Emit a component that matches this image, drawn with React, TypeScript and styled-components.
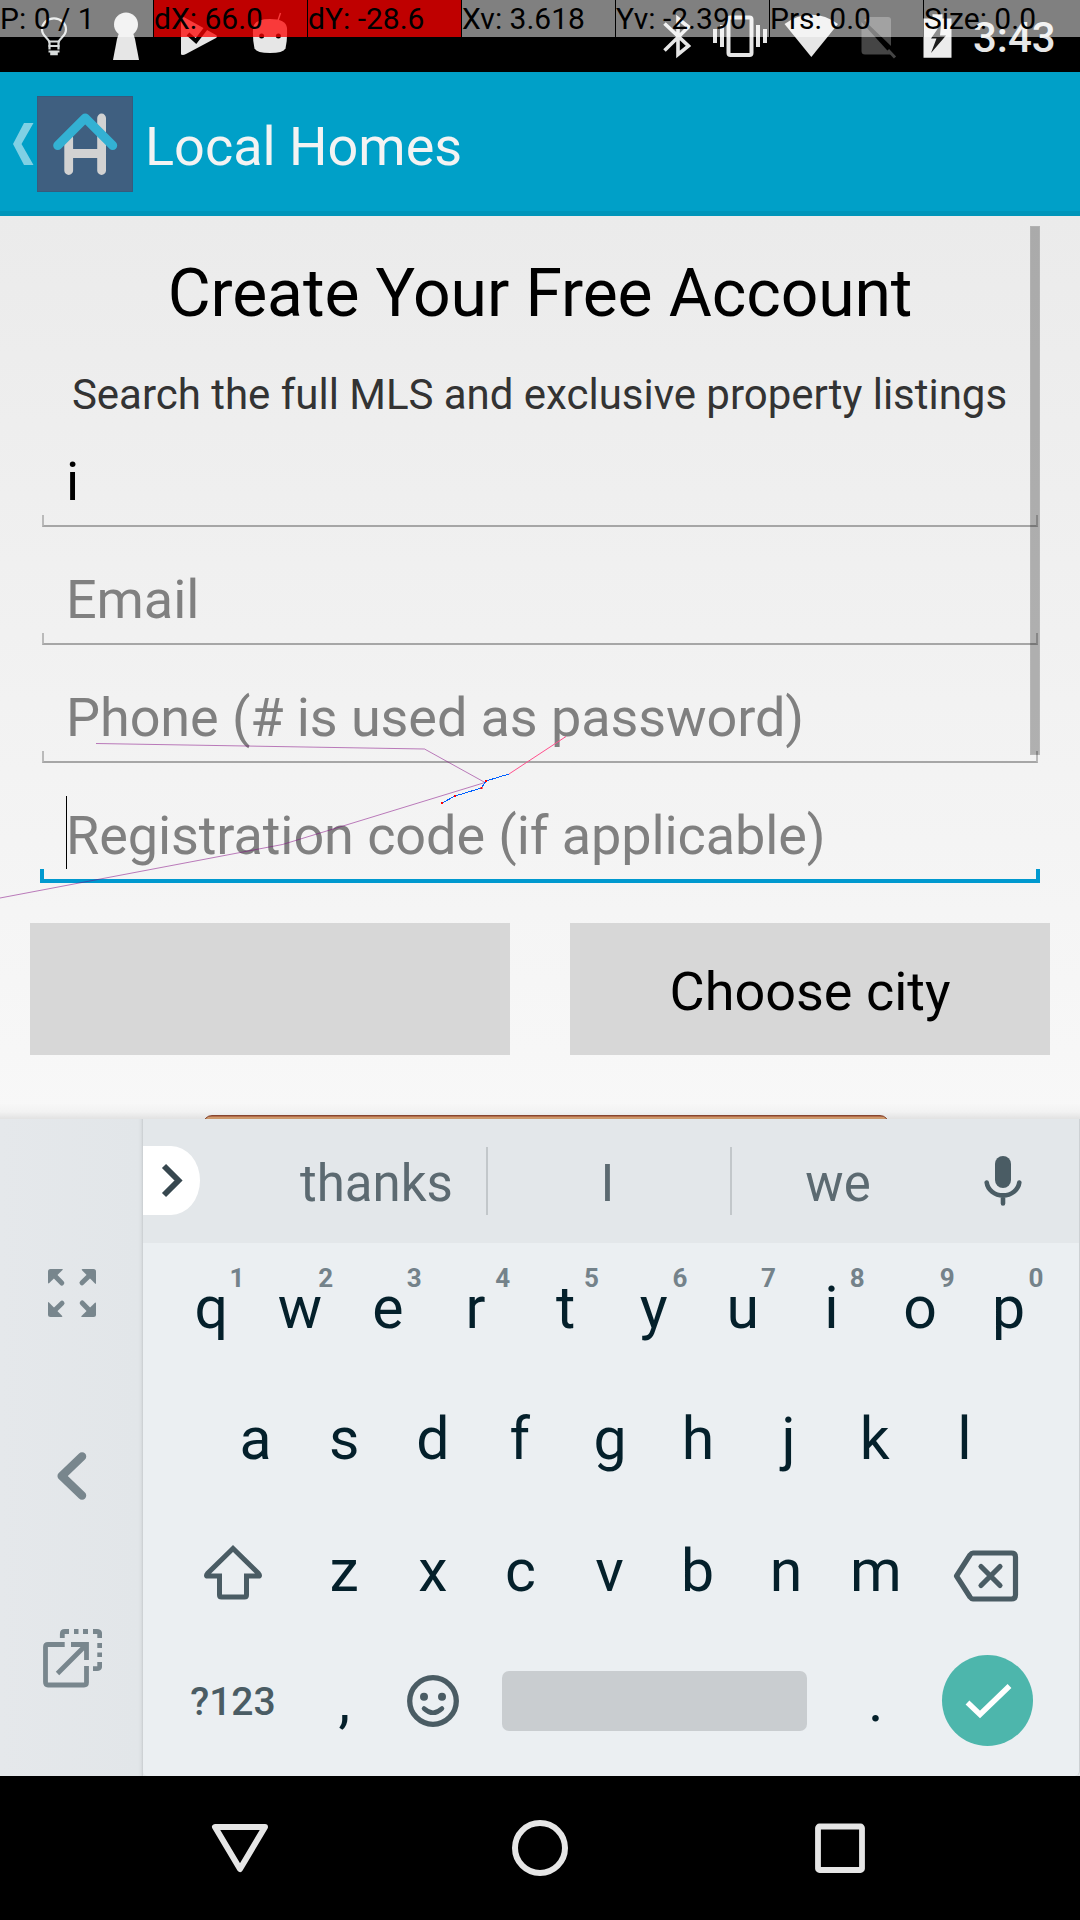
import React from "react";
import styled, { createGlobalStyle, css } from "styled-components";

const GlobalStyle = createGlobalStyle`
  *, *::before, *::after { box-sizing: border-box; }
  html, body { margin: 0; padding: 0; background: #000; }
  body { font-family: Roboto, "Noto Sans", sans-serif; }
  svg { display: block; flex: none; }
`;

const Screen = styled.div`
  position: relative;
  display: flex;
  flex-direction: column;
  width: 1080px;
  height: 1920px;
  overflow: hidden;
  background: #000;
`;

/* ---------- status bar ---------- */

const StatusBar = styled.header`
  display: flex;
  justify-content: space-between;
  flex: none;
  height: 72px;
  padding: 0 22px 0 18px;
  background: #000;
  color: #e6e6e6;
`;

const StatusGroup = styled.div`
  display: flex;
`;

const Clock = styled.time`
  width: 86px;
  padding: 2px 0 0 1px;
  font-size: 42px;
  font-weight: 500;
  line-height: 72px;
  white-space: nowrap;
`;

const PointerBar = styled.div`
  position: absolute;
  top: 0;
  left: 0;
  right: 0;
  display: grid;
  grid-template-columns: repeat(6, 154px) 1fr;
  height: 37px;
`;

const PointerCell = styled.div<{ $alert?: boolean }>`
  margin-right: 1px;
  background: ${(p) => (p.$alert ? "rgba(255,0,0,0.75)" : "rgba(255,255,255,0.5)")};
  color: #000;
  font-size: 30px;
  line-height: 37px;
  white-space: pre;

  &:last-child { margin-right: 0; }
`;

const PointerTrail = styled.svg`
  position: absolute;
  top: 720px;
  left: 0;
`;

/* ---------- action bar ---------- */

const ActionBar = styled.div`
  display: flex;
  align-items: center;
  flex: none;
  height: 144px;
  padding-left: 13px;
  background: linear-gradient(#00a0c8 0 139px, #0095ba 139px 144px);
`;

const AppLogo = styled.svg`
  margin-left: 3px;
  background: #3f5f80;
`;

const AppTitle = styled.h1`
  margin: 5px 0 0 12px;
  color: #f3f3f3;
  font-size: 54px;
  font-weight: 400;
  line-height: 64px;
`;

/* ---------- sign-up form ---------- */

const Content = styled.main`
  position: relative;
  flex: none;
  height: 903px;
  overflow: hidden;
  background: linear-gradient(#ebebeb, #f8f8f8);
`;

const Heading = styled.h2`
  margin: 0;
  padding-top: 39px;
  color: #000;
  font-size: 66px;
  font-weight: 400;
  letter-spacing: -0.09px;
  line-height: 78px;
  text-align: center;
`;

const Subheading = styled.p`
  margin: 37px 0 0;
  padding-right: 1px;
  color: #333;
  font-size: 42px;
  letter-spacing: -0.02px;
  line-height: 50px;
  text-align: center;
`;

const Fields = styled.form`
  display: flex;
  flex-direction: column;
  gap: 10px;
  margin: 1px 40px 0;
`;

const Field = styled.div`
  display: flex;
  flex-direction: column;
  justify-content: space-between;
  height: 108px;
`;

const FieldText = styled.div<{ $filled?: boolean; $focused?: boolean }>`
  display: flex;
  align-items: flex-end;
  height: ${(p) => (p.$focused ? 94 : 91)}px;
  padding-left: 26px;
  color: ${(p) => (p.$filled ? "#000" : "#808080")};
  font-size: 54px;
  letter-spacing: -0.09px;
  line-height: 60px;
  white-space: nowrap;

  span { margin-bottom: ${(p) => (p.$focused ? 3 : 0)}px; }
`;

const Caret = styled.i`
  width: 1px;
  height: 73px;
  margin-right: -1px;
  background: #000;
`;

const Underline = styled.div<{ $focused?: boolean }>`
  ${(p) =>
    p.$focused
      ? css`
          height: 14px;
          border: 4px solid #0099cf;
        `
      : css`
          height: 12px;
          margin: 0 2px 2px;
          border: 2px solid #bababa;
          border-bottom-color: #a6a6a6;
        `}
  border-top: 0;
`;

const ScrollThumb = styled.div`
  position: absolute;
  top: 10px;
  right: 40px;
  width: 10px;
  height: 529px;
  border: 1px solid rgba(0, 0, 0, 0.245);
  background: rgba(0, 0, 0, 0.275);
  background-clip: padding-box;
`;

const PickerRow = styled.div`
  display: grid;
  grid-template-columns: 1fr 1fr;
  gap: 60px;
  margin: 40px 30px 60px;
`;

const PickerButton = styled.button`
  height: 132px;
  padding: 5px 0 0;
  border: 0;
  background: #d7d7d7;
  color: #000;
  font: 400 54px/64px Roboto, sans-serif;
`;

const SubmitButton = styled.button`
  display: block;
  width: 686px;
  height: 110px;
  margin: 0 0 0 203px;
  border: 1px solid #8e4a33;
  border-radius: 9px;
  background: linear-gradient(#c07450 0 1px, #dea574 1px 4px, #d98c50);
`;

const KeyboardShadow = styled.div`
  position: absolute;
  left: 0;
  right: 0;
  bottom: 0;
  height: 16px;
  background: linear-gradient(rgba(0, 0, 0, 0), rgba(0, 0, 0, 0.025) 55%, rgba(0, 0, 0, 0.09));
`;

/* ---------- keyboard ---------- */

const Keyboard = styled.section`
  display: flex;
  flex: none;
  height: 657px;
  background: #e3e7ea;
`;

const SidePanel = styled.div`
  display: flex;
  flex-direction: column;
  flex: none;
  width: 143px;
  padding-top: 82px;
  background: linear-gradient(90deg, #e5e8eb, #e2e6e9 138px, #dce0e3 141px, #c9cdd0 143px);
`;

const SideButton = styled.div`
  display: flex;
  align-items: center;
  justify-content: center;
  height: 183px;

  &:last-child { height: 181px; }
`;

const KeyboardBody = styled.div`
  flex: 1;
  overflow: hidden;
  border-right: 1px solid #cdd1d4;
  border-radius: 0 0 5px 5px;
  background: #ebeff2;
`;

const SuggestionStrip = styled.div`
  display: flex;
  align-items: center;
  height: 124px;
  background: #e3e7ea;
`;

const ExpandTab = styled.div`
  width: 57px;
  height: 69px;
  margin: 0 65px 1px 0;
  border-radius: 0 29px 29px 0 / 0 34.5px 34.5px 0;
  background: #fff;
`;

const Suggestion = styled.div<{ $width: number; $shift?: number }>`
  width: ${(p) => p.$width}px;
  padding-top: 6px;
  color: #5c6a71;
  font-size: 51px;
  line-height: 64px;
  text-align: center;
  text-indent: ${(p) => 2 * (p.$shift ?? 0)}px;
`;

const VoiceButton = styled.div`
  display: flex;
  justify-content: center;
  width: 118px;
  padding-bottom: 1px;
`;

const Divider = styled.i`
  width: 2px;
  height: 68px;
  background: #c2c7ca;
`;

const KeyRow = styled.div<{ $inset: number }>`
  display: flex;
  height: 131px;
  padding-left: ${(p) => p.$inset}px;
`;

const Key = styled.div<{ $span?: number; $lower?: number; $nudge?: number }>`
  position: relative;
  display: flex;
  align-items: center;
  justify-content: center;
  flex: none;
  width: ${(p) => 88.6 * (p.$span ?? 1)}px;
  padding-top: ${(p) => 2 * (p.$lower ?? 0)}px;
  padding-bottom: 2px;
  color: #04202b;
  font-size: 59px;
  line-height: 69px;
  text-indent: ${(p) => 2 * (p.$nudge ?? 0)}px;
`;

const Hint = styled.sup`
  position: absolute;
  top: 19.5px;
  left: 50px;
  width: 40px;
  color: #74828a;
  font-size: 26px;
  font-weight: 700;
  line-height: 30px;
  text-align: center;
  text-indent: 0;

  ${Key}:nth-last-child(-n + 2) > & { left: 51.500px; }
`;

const SymbolLabel = styled.span`
  padding: 2px 1px 0 0;
  color: #4a5c64;
  font-size: 39px;
  font-weight: 500;
  line-height: 46px;
`;

const SpaceBar = styled.div`
  width: 305px;
  height: 60px;
  border-radius: 7px;
  background: #c9cdd0;
`;

const DoneButton = styled.div`
  width: 91px;
  height: 91px;
  margin-left: 1px;
  border-radius: 50%;
  background: #4db6ac;
`;

/* ---------- navigation bar ---------- */

const NavBar = styled.nav`
  display: flex;
  justify-content: center;
  align-items: center;
  gap: 240px;
  flex: none;
  height: 144px;
  background: #000;
`;

/* ---------- drawings ---------- */

const BulbIcon = () => (
  <svg width="72" height="72" fill="none" stroke="#d8dcdc" strokeWidth="2.2">
    <path d="M31.5 49.5V43C31.5 38 24 37 24 29.5a12 11.2 0 0 1 24 0C48 37 40.5 38 40.5 43v6.5" />
    <path d="M30.5 41.5h11M30.5 46h11M30.5 51.5h11" />
    <path d="M32.2 53.5h7.6" strokeWidth="3.5" />
  </svg>
);

const KeyholeIcon = () => (
  <svg width="72" height="72" fill="#e6e6e6">
    <circle cx="36" cy="24.5" r="12" />
    <path d="M29 33h14l2 6 4 21H23l4-21z" />
  </svg>
);

const PlayCheckIcon = () => (
  <svg width="72" height="72" fill="#e6e6e6">
    <path d="M19 17.5q2-1.5 5 .8L54 35q2 1.500 0 3L24 54q-3 1.600-5 .6z" />
    <path d="M26 34l8 7L48 23" fill="none" stroke="#000" strokeWidth="4" />
  </svg>
);

const AndroidIcon = () => (
  <svg width="72" height="72">
    <path d="M43.500 22L46.500 13" stroke="#e6e6e6" strokeWidth="1.400" />
    <path d="M19 28Q20 19 36 19T53 28Q53.500 40 51.500 48.500Q49 53 36 53T20.500 48.500Q18.500 40 19 28Z" fill="#e6e6e6" />
    <circle cx="27.600" cy="36" r="2.500" />
    <circle cx="44.400" cy="36" r="2.500" />
  </svg>
);

const BluetoothIcon = () => (
  <svg width="50" height="72" fill="none" stroke="#e6e6e6" strokeWidth="3.600">
    <path d="M4.500 23.500L28.500 46 18 54.500V18.500L28.500 27 4.500 50.500" />
  </svg>
);

const VibrateIcon = () => (
  <svg width="72" height="72" fill="#e6e6e6">
    <rect x="18.500" y="17.500" width="23" height="37.500" rx="2" fill="none" stroke="#e6e6e6" strokeWidth="4" />
    <path d="M3 29h4v14H3zM10 25h4v22h-4zM46 25h4v22h-4zM53 29h4v14h-4z" />
  </svg>
);

const WifiIcon = () => (
  <svg width="76" height="72" fill="#e6e6e6">
    <path d="M2.500 24Q15 14.700 29.300 14.700T56 24L29.300 57z" />
  </svg>
);

const NoSimIcon = () => (
  <svg width="62" height="72">
    <path d="M12 17h18q3 0 3 3v26L6 20z" fill="#454545" />
    <path d="M3.500 22L33 54.500H7q-3.500 0-3.500-3.500z" fill="#454545" />
    <path d="M30 50l7 7.500" stroke="#454545" strokeWidth="3" />
  </svg>
);

const BatteryIcon = () => (
  <svg width="52" height="72">
    <path d="M3.500 18.500h9v-4.300h10v4.300h9v39.300h-28z" fill="#ececec" />
    <path d="M21 24L11 38.500h5.500L11 53 26 35.500h-6z" fill="#1a1a1a" />
  </svg>
);

const UpCaret = () => (
  <svg width="21" height="42" fill="#80d0e4">
    <path d="M11 0h9.500L8.500 21l12 21H11L0 21z" />
  </svg>
);

const HomeLogo = () => (
  <AppLogo width="96" height="96" viewBox="0 0 96 96" fill="none" strokeLinecap="round" strokeLinejoin="round">
    <path d="M31.700 42v32.500M64.600 22v52.500M31.700 57.500h33" stroke="#d2d2d2" strokeWidth="8.800" />
    <path d="M20.700 49.500L48.200 22l27.500 27.500" stroke="#33b1d3" strokeWidth="9" />
    <rect x="0.500" y="0.500" width="95" height="95" stroke="#365a7c" />
  </AppLogo>
);

const Trail = () => (
  <PointerTrail width="1080" height="190" fill="none">
    <path d="M96 23.500L424.500 29 485 62.500 282.500 124.500 0 178" stroke="#800080" strokeOpacity="0.5" />
    <path d="M566 16.500L509 54" stroke="#ff4f8c" />
    <path d="M509 54L486 61 481.500 68 455 76 442 83" stroke="#0060ff" shapeRendering="crispEdges" />
    <path d="M485 60h2v2h-2zM480.500 67h2v2h-2zM454 75h2v2h-2zM441 82h2v2h-2z" fill="#ff0000" />
  </PointerTrail>
);

const FullscreenIcon = () => (
  <svg width="48" height="48" viewBox="0 0 48 48" fill="#78868d">
    {[0, 90, 180, 270].map((angle) => (
      <g key={angle} transform={`rotate(${angle} 24 24)`}>
        <path d="M0 2.500Q0 0 2.500 0H14q1.500 0 .5 1L1.300 14Q0 15 0 13.500z" />
        <path d="M5 5l8.800 9" stroke="#78868d" strokeWidth="5" strokeLinecap="round" />
      </g>
    ))}
  </svg>
);

const BackChevron = () => (
  <svg width="30" height="48" fill="none" stroke="#78868d" strokeWidth="8.500" strokeLinecap="round" strokeLinejoin="round">
    <path d="M25 4.500L4.700 24 25 43.500" />
  </svg>
);

const FloatIcon = () => (
  <svg width="60" height="60" fill="none" stroke="#78868d" strokeWidth="4.800">
    <path d="M22.700 16.500H6q-2.500 0-2.500 2.500v35q0 3 2.500 3h36q2.500 0 2.500-2.500V38" />
    <path d="M29 16.500h15.500V32M43 18L15.500 45.500" />
    <path d="M35 15h11v11z" fill="#78868d" stroke="none" />
    <path d="M20.300 10V6q0-2.500 2.500-2.500H27M32 3.500h4.500M41 3.500h5M51 3.500h4q2.700 0 2.700 2.500v4M57.700 15v5M57.700 24.500v4.500M57.700 34v4q0 2.700-2.700 2.700h-4" />
  </svg>
);

const MicIcon = () => (
  <svg width="38" height="50" fill="#4a5c64">
    <rect x="11" y="0" width="16" height="32" rx="8" />
    <path d="M2.700 26.500a16.400 14.500 0 0 0 32.600 0M19 41v6.500" fill="none" stroke="#4a5c64" strokeWidth="4.600" strokeLinecap="round" />
  </svg>
);

const ShiftIcon = () => (
  <svg width="60" height="58" fill="none" stroke="#4a5c64" strokeWidth="5">
    <path d="M30 4.500L4.500 29.500q-2 2.500 0 2.500h12V51q0 2 2 2h23q2 0 2-2V32h12q2 0 0-2.500z" />
  </svg>
);

const BackspaceIcon = () => (
  <svg width="66" height="52" fill="none" stroke="#4a5c64" strokeWidth="5.200" strokeLinejoin="round">
    <path d="M3.500 26L17 5q1.500-2 3-2h38.500q4 0 4 4v38q0 4-4 4H20q-1.500 0-3-2z" />
    <path d="M28 16.500l19 19M47 16.500l-19 19" strokeLinecap="round" />
  </svg>
);

const SmileyIcon = () => (
  <svg width="52" height="52">
    <circle cx="26" cy="26" r="23.300" fill="none" stroke="#4a5c64" strokeWidth="5.300" />
    <circle cx="17" cy="21.800" r="4" fill="#4a5c64" />
    <circle cx="35" cy="21.800" r="4" fill="#4a5c64" />
    <path d="M17 33.500q9 8.500 18 0" fill="none" stroke="#4a5c64" strokeWidth="4.500" strokeLinecap="round" />
  </svg>
);

/* ---------- page ---------- */

const readouts = [
  { text: "P: 0 / 1" },
  { text: "dX: 66.0", alert: true },
  { text: "dY: -28.6", alert: true },
  { text: "Xv: 3.618" },
  { text: "Yv: -2.390" },
  { text: "Prs: 0.0" },
  { text: "Size: 0.0" },
];

const fields = [
  { text: "i", filled: true },
  { text: "Email" },
  { text: "Phone (# is used as password)" },
  { text: "Registration code (if applicable)", focused: true },
];

const nudges: Record<string, number> = {
  r: -1.5,
  f: -1.5,
  j: 1.5,
  c: -1,
  e: -0.5,
  y: -0.5,
  k: -1,
  h: -0.5,
  v: -0.5,
  b: -1,
  n: -1,
};

export default function App() {
  return (
    <>
      <GlobalStyle />
      <Screen>
        <StatusBar>
          <StatusGroup>
            <BulbIcon />
            <KeyholeIcon />
            <PlayCheckIcon />
            <AndroidIcon />
          </StatusGroup>
          <StatusGroup>
            <BluetoothIcon />
            <VibrateIcon />
            <WifiIcon />
            <NoSimIcon />
            <BatteryIcon />
            <Clock>3:43</Clock>
          </StatusGroup>
        </StatusBar>

        <ActionBar>
          <UpCaret />
          <HomeLogo />
          <AppTitle>Local Homes</AppTitle>
        </ActionBar>

        <Content>
          <Heading>Create Your Free Account</Heading>
          <Subheading>Search the full MLS and exclusive property listings</Subheading>
          <Fields>
            {fields.map((f) => (
              <Field key={f.text}>
                <FieldText $filled={f.filled} $focused={f.focused}>
                  {f.focused && <Caret />}
                  <span>{f.text}</span>
                </FieldText>
                <Underline $focused={f.focused} />
              </Field>
            ))}
          </Fields>
          <PickerRow>
            <PickerButton />
            <PickerButton>Choose city</PickerButton>
          </PickerRow>
          <SubmitButton />
          <ScrollThumb />
          <KeyboardShadow />
        </Content>

        <Keyboard>
          <SidePanel>
            <SideButton><FullscreenIcon /></SideButton>
            <SideButton><BackChevron /></SideButton>
            <SideButton><FloatIcon /></SideButton>
          </SidePanel>
          <KeyboardBody>
            <SuggestionStrip>
              <ExpandTab>
                <svg width="57" height="69" fill="none" stroke="#37474f" strokeWidth="5.800">
                  <path d="M21 20L35.500 34.500 21 49" />
                </svg>
              </ExpandTab>
              <Suggestion $width={221} $shift={1}>thanks</Suggestion>
              <Divider />
              <Suggestion $width={242} $shift={-1.5}>I</Suggestion>
              <Divider />
              <Suggestion $width={212}>we</Suggestion>
              <VoiceButton><MicIcon /></VoiceButton>
            </SuggestionStrip>
            <KeyRow $inset={24}>
              {[..."qwertyuiop"].map((c, i) => (
                <Key key={c} $nudge={nudges[c]}>
                  {c}
                  <Hint>{(i + 1) % 10}</Hint>
                </Key>
              ))}
            </KeyRow>
            <KeyRow $inset={68.3}>
              {[..."asdfghjkl"].map((c) => (
                <Key key={c} $nudge={nudges[c]}>{c}</Key>
              ))}
            </KeyRow>
            <KeyRow $inset={24}>
              <Key $span={1.5} $lower={3}><ShiftIcon /></Key>
              {[..."zxcvbnm"].map((c) => (
                <Key key={c} $lower={1} $nudge={nudges[c]}>{c}</Key>
              ))}
              <Key $span={1.5} $lower={6}><BackspaceIcon /></Key>
            </KeyRow>
            <KeyRow $inset={24}>
              <Key $span={1.5}><SymbolLabel>?123</SymbolLabel></Key>
              <Key>,</Key>
              <Key><SmileyIcon /></Key>
              <Key $span={4}><SpaceBar /></Key>
              <Key>.</Key>
              <Key $span={1.5}>
                <DoneButton>
                  <svg width="91" height="91" fill="none" stroke="#fff" strokeWidth="5.500">
                    <path d="M25.500 47.500L38 59.500 67.500 31" />
                  </svg>
                </DoneButton>
              </Key>
            </KeyRow>
          </KeyboardBody>
        </Keyboard>

        <NavBar>
          <svg width="60" height="60" fill="none" stroke="#e6e6e6" strokeWidth="6" strokeLinejoin="round">
            <path d="M5 9h50L30 51z" />
          </svg>
          <svg width="60" height="60" fill="none" stroke="#e6e6e6" strokeWidth="6">
            <circle cx="30" cy="30" r="25" />
          </svg>
          <svg width="60" height="60" fill="none" stroke="#e6e6e6" strokeWidth="5.800">
            <rect x="8" y="8.500" width="44" height="43.500" rx="1.500" />
          </svg>
        </NavBar>

        <Trail />
        <PointerBar>
          {readouts.map((r) => (
            <PointerCell key={r.text} $alert={r.alert}>{r.text}</PointerCell>
          ))}
        </PointerBar>
      </Screen>
    </>
  );
}
